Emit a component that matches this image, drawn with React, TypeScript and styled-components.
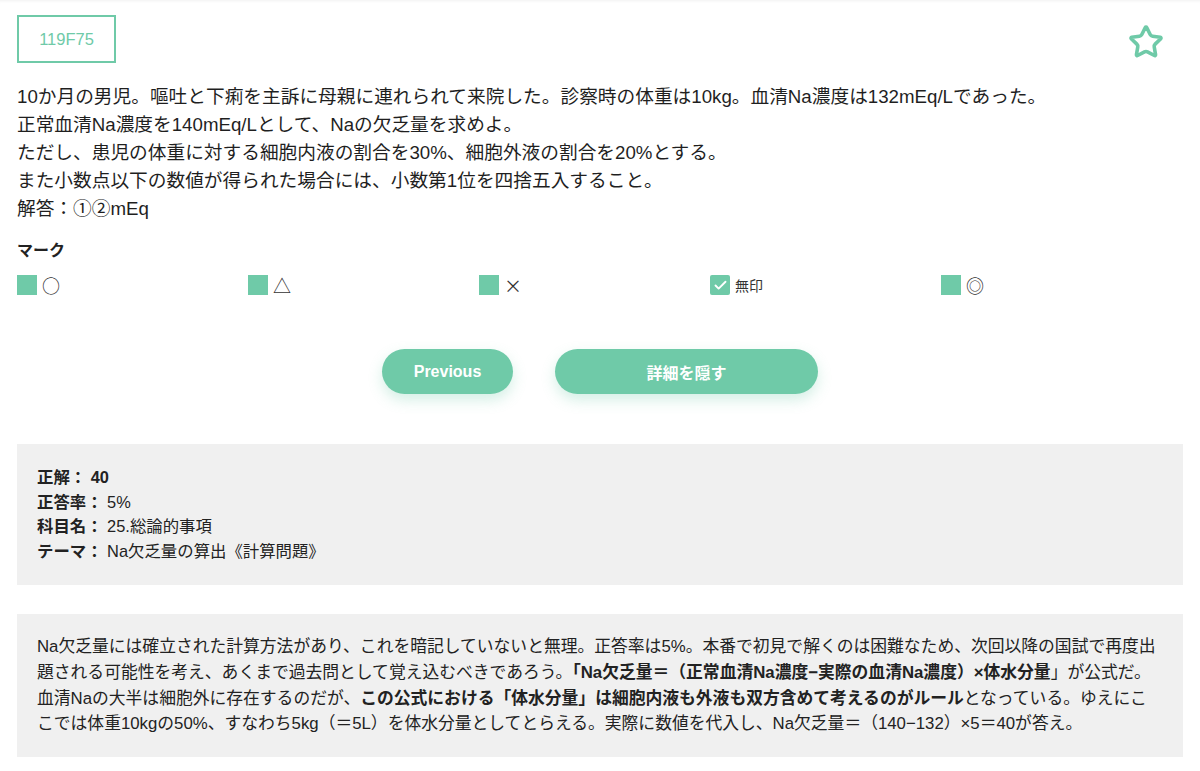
import styled, { createGlobalStyle } from "styled-components";
import { Star, Check } from "lucide-react";

const GREEN = "#6fcaa8";

const GlobalStyle = createGlobalStyle`
  html, body {
    margin: 0;
    padding: 0;
    background: #fff;
  }
  body {
    font-family: "Liberation Sans", "Noto Sans CJK JP", sans-serif;
    color: #222;
  }
`;

type Mark = { symbol: string; checked?: boolean };

const marks: Mark[] = [
  { symbol: "○" },
  { symbol: "△" },
  { symbol: "×" },
  { symbol: "無印", checked: true },
  { symbol: "◎" },
];

const question = [
  "10か月の男児。嘔吐と下痢を主訴に母親に連れられて来院した。診察時の体重は10kg。血清Na濃度は132mEq/Lであった。",
  "正常血清Na濃度を140mEq/Lとして、Naの欠乏量を求めよ。",
  "ただし、患児の体重に対する細胞内液の割合を30%、細胞外液の割合を20%とする。",
  "また小数点以下の数値が得られた場合には、小数第1位を四捨五入すること。",
  "解答：①②mEq",
];

export default function App() {
  return (
    <>
      <GlobalStyle />
      <Page>
        <Header>
          <IdBadge>119F75</IdBadge>
          <StarButton aria-label="favorite">
            <Star size={36} strokeWidth={2.4} color={GREEN} />
          </StarButton>
        </Header>

        <Question>
          {question.map((line) => (
            <p key={line}>{line}</p>
          ))}
        </Question>

        <MarkTitle>マーク</MarkTitle>
        <MarkRow>
          {marks.map((m) => (
            <MarkItem key={m.symbol}>
              <Box $checked={m.checked}>
                {m.checked && <Check size={15} strokeWidth={3} color="#fff" />}
              </Box>
              <MarkLabel $small={m.checked}>{m.symbol}</MarkLabel>
            </MarkItem>
          ))}
        </MarkRow>

        <Buttons>
          <PillButton $width={131}>Previous</PillButton>
          <PillButton $width={263}>詳細を隠す</PillButton>
        </Buttons>

        <InfoPanel>
          <InfoLine>
            <b>正解：</b> <b>40</b>
          </InfoLine>
          <InfoLine>
            <b>正答率：</b> 5%
          </InfoLine>
          <InfoLine>
            <b>科目名：</b> 25.総論的事項
          </InfoLine>
          <InfoLine>
            <b>テーマ：</b> Na欠乏量の算出《計算問題》
          </InfoLine>
        </InfoPanel>

        <Explanation>
          Na欠乏量には確立された計算方法があり、これを暗記していないと無理。正答率は5%。本番で初見で解くのは困難なため、次回以降の国試で再度出題される可能性を考え、あくまで過去問として覚え込むべきであろう。
          <b>「Na欠乏量＝（正常血清Na濃度−実際の血清Na濃度）×体水分量</b>」が公式だ。血清Naの大半は細胞外に存在するのだが、
          <b>この公式における「体水分量」は細胞内液も外液も双方含めて考えるのがルール</b>
          となっている。ゆえにここでは体重10kgの50%、すなわち5kg（＝5L）を体水分量としてとらえる。実際に数値を代入し、Na欠乏量＝（140−132）×5＝40が答え。
        </Explanation>
      </Page>
    </>
  );
}

const Page = styled.main`
  padding: 15px 17px 16px;
  box-shadow: inset 0 3px 3px -2px rgba(0, 0, 0, 0.06);
`;

const Header = styled.header`
  display: flex;
  justify-content: space-between;
  align-items: flex-start;
`;

const IdBadge = styled.div`
  box-sizing: border-box;
  width: 99px;
  height: 48px;
  display: flex;
  align-items: center;
  justify-content: center;
  border: 2px solid ${GREEN};
  color: ${GREEN};
  font-size: 16.5px;
`;

const StarButton = styled.button`
  border: none;
  background: none;
  padding: 0;
  margin: 9px 19px 0 0;
  display: flex;
  cursor: pointer;
`;

const Question = styled.section`
  margin-top: 20px;
  font-size: 18.7px;
  line-height: 28px;
  color: #1f1f1f;

  p {
    margin: 0;
  }
`;

const MarkTitle = styled.h3`
  margin: 16px 0 0;
  font-size: 16px;
  line-height: 24px;
  font-weight: bold;
`;

const MarkRow = styled.div`
  display: grid;
  grid-template-columns: repeat(5, 231px);
  margin-top: 12px;
`;

const MarkItem = styled.label`
  display: flex;
  align-items: center;
  gap: 5px;
  height: 20px;
`;

const Box = styled.span<{ $checked?: boolean }>`
  width: 20px;
  height: 20px;
  background: ${GREEN};
  display: flex;
  align-items: center;
  justify-content: center;
  border-radius: ${({ $checked }) => ($checked ? "2px" : "0")};
`;

const MarkLabel = styled.span<{ $small?: boolean }>`
  font-family: "Noto Sans CJK JP", sans-serif;
  font-size: ${({ $small }) => ($small ? "14px" : "18px")};
  color: #333;
  line-height: 20px;
`;

const Buttons = styled.div`
  display: flex;
  justify-content: center;
  gap: 42px;
  margin-top: 54px;
`;

const PillButton = styled.button<{ $width: number }>`
  width: ${({ $width }) => $width}px;
  height: 45px;
  border: none;
  border-radius: 23px;
  background: ${GREEN};
  color: #fff;
  font-family: inherit;
  font-size: 16px;
  font-weight: bold;
  box-shadow: 0 6px 14px rgba(111, 202, 168, 0.3);
  cursor: pointer;
`;

const InfoPanel = styled.section`
  margin-top: 50px;
  background: #f0f0f0;
  padding: 21px 20px 22px;
  font-size: 16.4px;
  line-height: 24.5px;
  color: #222;
`;

const InfoLine = styled.div``;

const Explanation = styled.section`
  margin-top: 29px;
  background: #f0f0f0;
  padding: 20px 20px 20px;
  font-size: 16.8px;
  line-height: 25.8px;
  color: #222;

  b {
    font-weight: bold;
  }
`;
